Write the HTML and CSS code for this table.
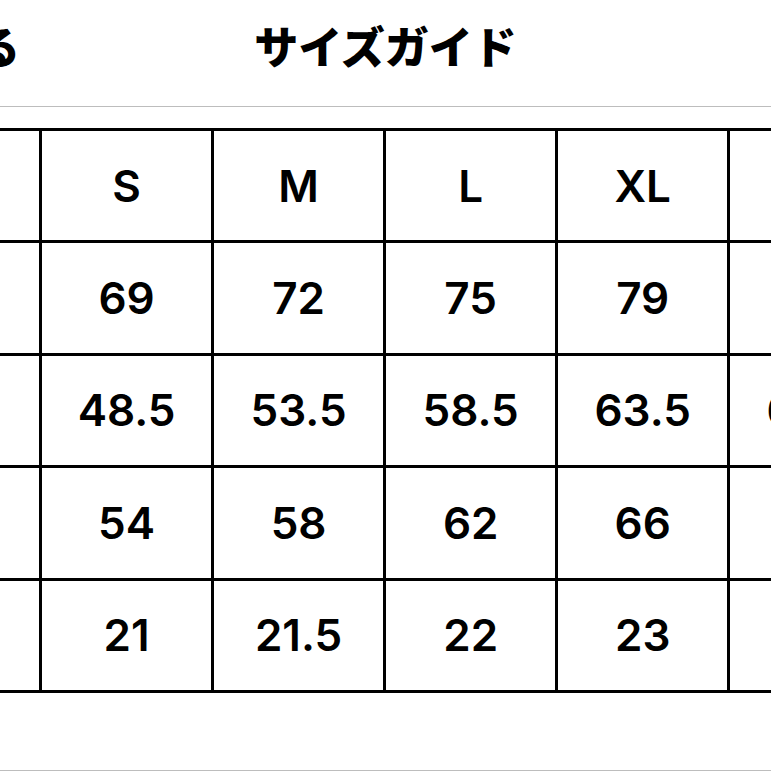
FILE: index.html
```html
<!DOCTYPE html>
<html lang="ja">
<head>
<meta charset="utf-8">
<title>サイズガイド</title>
<link rel="stylesheet" href="styles.css">
</head>
<body>
<header class="bar">
  <div class="bar-side"><button class="close">閉じる</button></div>
  <h1 class="title">サイズガイド</h1>
  <div class="bar-side"></div>
</header>
<div class="table-wrap">
  <div class="size-grid">
    <div class="cell label">サイズ</div>
    <div class="cell">S</div>
    <div class="cell">M</div>
    <div class="cell">L</div>
    <div class="cell">XL</div>
    <div class="cell">XXL</div>

    <div class="cell label">着丈</div>
    <div class="cell">69</div>
    <div class="cell">72</div>
    <div class="cell">75</div>
    <div class="cell">79</div>
    <div class="cell">82</div>

    <div class="cell label">身幅</div>
    <div class="cell">48.5</div>
    <div class="cell">53.5</div>
    <div class="cell">58.5</div>
    <div class="cell">63.5</div>
    <div class="cell">68.5</div>

    <div class="cell label">肩幅</div>
    <div class="cell">54</div>
    <div class="cell">58</div>
    <div class="cell">62</div>
    <div class="cell">66</div>
    <div class="cell">70</div>

    <div class="cell label">袖丈</div>
    <div class="cell">21</div>
    <div class="cell">21.5</div>
    <div class="cell">22</div>
    <div class="cell">23</div>
    <div class="cell">24</div>
  </div>
</div>
<div class="footer-line"></div>
</body>
</html>
```

FILE: styles.css
```css
html, body {
  margin: 0;
  padding: 0;
  overflow: hidden;
  background: #fff;
}
body {
  width: 771px;
  height: 771px;
  color: #000;
  font-family: Inter, "Liberation Sans", "Noto Sans CJK JP", sans-serif;
}
.bar {
  display: grid;
  grid-template-columns: 1fr auto 1fr;
  align-items: start;
  height: 106px;
  border-bottom: 1px solid #bdbdbd;
}
.bar-side {
  display: flex;
}
.close {
  margin: 23px 0 0 -112px;
  padding: 0;
  border: 0;
  background: none;
  color: #000;
  font: 900 44px/44px "Noto Sans CJK JP", sans-serif;
}
.title {
  margin: 23px 0 0;
  font: 900 44px/44px "Noto Sans CJK JP", sans-serif;
  color: #000;
}
.table-wrap {
  margin-top: 21px;
  margin-left: -133px;
}
.size-grid {
  display: grid;
  grid-template-columns: repeat(6, 169.05px);
  grid-template-rows: repeat(5, 109.4px);
  gap: 3px;
  padding: 3px;
  background: #000;
  width: max-content;
}
.cell {
  background: #fff;
  display: flex;
  align-items: center;
  justify-content: center;
  font-size: 44px;
  font-weight: 600;
}
.cell.label {
  font: 700 30px "Noto Sans CJK JP", sans-serif;
}
.footer-line {
  margin-top: 77px;
  border-top: 1px solid #bdbdbd;
}
```
